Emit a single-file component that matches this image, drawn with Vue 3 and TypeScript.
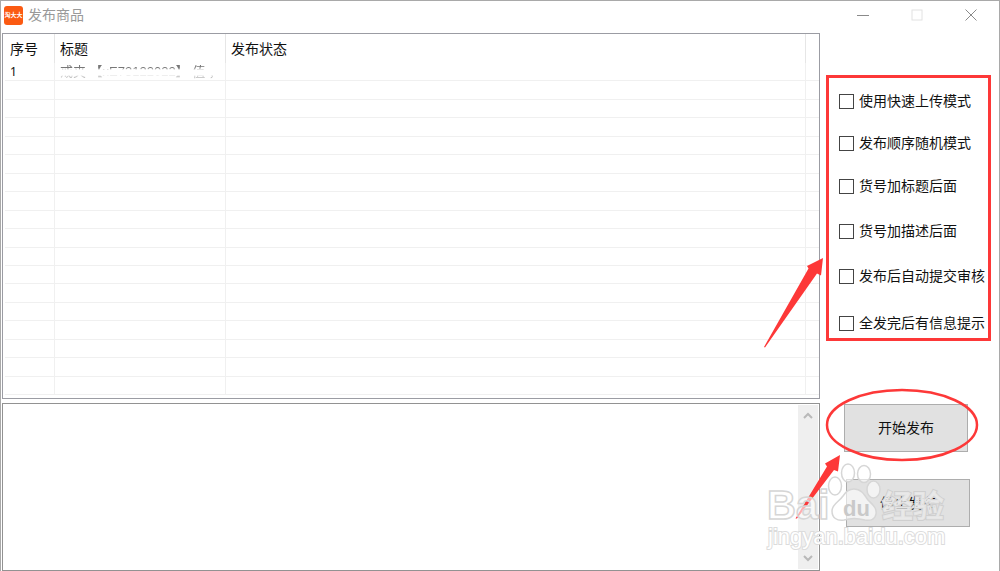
<script setup lang="ts">
import { reactive } from 'vue'

interface Option {
  id: string
  label: string
  checked: boolean
}

const options = reactive<Option[]>([
  { id: 'fast', label: '使用快速上传模式', checked: false },
  { id: 'random', label: '发布顺序随机模式', checked: false },
  { id: 'after-title', label: '货号加标题后面', checked: false },
  { id: 'after-desc', label: '货号加描述后面', checked: false },
  { id: 'auto-submit', label: '发布后自动提交审核', checked: false },
  { id: 'notify', label: '全发完后有信息提示', checked: false },
])

const emptyRows = 17
</script>

<template>
  <div class="window">
    <header class="titlebar">
      <span class="logo">淘大大</span>
      <h1 class="title">发布商品</h1>
      <div class="controls">
        <button class="control" type="button" aria-label="最小化">
          <svg width="12" height="12" viewBox="0 0 12 12"><path d="M0 6.5H12" stroke="#8a8a8a" /></svg>
        </button>
        <button class="control" type="button" aria-label="最大化" disabled>
          <svg width="12" height="12" viewBox="0 0 12 12"><rect x="1" y="1" width="10" height="10" fill="none" stroke="#e2e2e2" /></svg>
        </button>
        <button class="control" type="button" aria-label="关闭">
          <svg width="12" height="12" viewBox="0 0 12 12"><path d="M.5 .5L11.5 11.5M11.5 .5L.5 11.5" stroke="#8a8a8a" /></svg>
        </button>
      </div>
    </header>

    <main class="body">
      <section class="left">
        <div class="list">
          <table class="grid">
            <colgroup>
              <col class="col-no" />
              <col class="col-title" />
              <col />
              <col class="col-end" />
            </colgroup>
            <thead>
              <tr>
                <th>序号</th>
                <th>标题</th>
                <th>发布状态</th>
                <td></td>
              </tr>
            </thead>
            <tbody>
              <tr>
                <td class="number">1</td>
                <td><span class="faded">戒夹 【xE73122022】 值 ，</span></td>
                <td></td>
                <td></td>
              </tr>
              <tr v-for="n in emptyRows" :key="n">
                <td></td>
                <td></td>
                <td></td>
                <td></td>
              </tr>
            </tbody>
          </table>
        </div>
        <div class="log">
          <textarea class="log-text" aria-label="发布日志" readonly></textarea>
          <div class="scrollbar">
            <svg width="10" height="8" viewBox="0 0 10 8"><path d="M1 6L5 2L9 6" fill="none" stroke="#b9b9b9" stroke-width="2" /></svg>
            <svg width="10" height="8" viewBox="0 0 10 8"><path d="M1 2L5 6L9 2" fill="none" stroke="#b9b9b9" stroke-width="2" /></svg>
          </div>
        </div>
      </section>

      <aside class="right">
        <div class="options">
          <label v-for="o in options" :key="o.id" class="option" :for="o.id">
            <input :id="o.id" v-model="o.checked" class="check" type="checkbox" />
            <span>{{ o.label }}</span>
          </label>
        </div>
        <div class="actions">
          <button class="action" type="button">开始发布</button>
          <button class="action stop" type="button">停止发布</button>
        </div>
      </aside>
    </main>

    <svg class="marks" width="240" height="571" viewBox="760 0 240 571" aria-hidden="true">
      <g fill="#fd3838">
        <path d="M764 347L808.500 268.500L807 266L823 258L821 275.500L817 273.500L765 347.500Z" />
        <path d="M795.500 518.500L827 466.500L825 463.500L840 455L838 471.500L834 470L797 518.500Z" />
      </g>
      <ellipse cx="902" cy="425" rx="75" ry="35" fill="none" stroke="#fd3838" stroke-width="2.500" />
      <g class="mark-shape">
        <ellipse cx="835" cy="486" rx="6.500" ry="9" />
        <ellipse cx="848" cy="473" rx="6.500" ry="9" />
        <ellipse cx="864" cy="474" rx="6.500" ry="8.500" />
        <ellipse cx="873.500" cy="489.500" rx="6.500" ry="8.500" />
        <path d="M854 489C861 489 864 494 868 500C873 505 877 508 876 514C875 520 870 521 865 520C858 518 850 518 844 520C837 521 832 518 832 511C832 504 839 502 843 496C846 491 849 489 854 489Z" />
      </g>
      <text class="mark-name" x="767" y="519">Bai</text>
      <text class="mark-du" x="843" y="516">du</text>
      <text class="mark-cn" x="882" y="517">经验</text>
      <text class="mark-url" x="768" y="544">jingyan.baidu.com</text>
    </svg>
  </div>
</template>

<style>
body {
  margin: 0;
  background: #fff;
}
</style>

<style scoped>
.window {
  position: relative;
  display: flex;
  flex-direction: column;
  box-sizing: border-box;
  height: 100vh;
  min-height: 480px;
  overflow: hidden;
  border: 1px solid #a9a9a9;
  border-bottom: 0;
  background: #fff;
  color: #111;
  font-family: "Liberation Sans", "Noto Sans CJK SC", sans-serif;
  font-size: 14px;
  line-height: 20px;
}

.window *,
.window *::before {
  box-sizing: border-box;
}

button,
textarea {
  font: inherit;
  color: inherit;
}

.titlebar {
  display: flex;
  flex: none;
  align-items: center;
  height: 32px;
  padding: 0 16px 4px 3px;
}

.logo {
  width: 19px;
  height: 19px;
  border-radius: 3px;
  background: #fb5a12;
  color: #fff;
  font-size: 6px;
  font-weight: 700;
  line-height: 19px;
  text-align: center;
  white-space: nowrap;
}

.title {
  margin: 0 0 0 5px;
  color: #999;
  font-size: 14px;
  font-weight: 400;
}

.controls {
  display: flex;
  gap: 30px;
  margin-left: auto;
}

.control {
  display: flex;
  align-items: center;
  justify-content: center;
  width: 24px;
  height: 24px;
  padding: 0;
  border: 0;
  background: none;
}

.body {
  display: flex;
  flex: 1;
  min-height: 0;
}

.left {
  display: flex;
  flex: 1;
  flex-direction: column;
  gap: 4px;
  min-width: 0;
  padding-left: 1px;
}

.list {
  flex: 366 1 0;
  min-height: 0;
  padding: 0 0 3px 2px;
  border: 1px solid #9b9ca3;
}

.grid {
  width: 100%;
  height: 100%;
  border-collapse: separate;
  border-spacing: 0;
  table-layout: fixed;
}

.col-no {
  width: 50px;
}

.col-title {
  width: 171px;
}

.col-end {
  width: 13px;
}

.grid th,
.grid td {
  padding: 0 0 0 5px;
  line-height: 16px;
  text-align: left;
  white-space: nowrap;
}

.grid thead tr {
  height: 29px;
}

.grid tbody tr {
  height: 18px;
}

.grid th {
  border-right: 1px solid #e6e6e6;
  font-weight: 400;
}

.grid tbody td {
  border-right: 1px solid #f0f0f0;
  border-bottom: 1px solid #f0f0f0;
}

.grid tbody td:last-child {
  border-right: 0;
}

.grid .number {
  font-family: "Noto Sans", sans-serif;
  font-size: 12px;
}

.faded {
  display: block;
  height: 16px;
  overflow: hidden;
  color: #777;
  font-size: 13px;
  mask-image: linear-gradient(#000 0 4px, transparent 6px 11px, rgba(0, 0, 0, 0.5) 13px);
}

.log {
  display: flex;
  flex: 168 1 0;
  min-height: 0;
  border: 1px solid #929292;
}

.log-text {
  flex: 1;
  min-width: 0;
  padding: 4px;
  border: 0;
  outline: 0;
  background: #fff;
  resize: none;
}

.scrollbar {
  display: flex;
  flex-direction: column;
  align-items: center;
  justify-content: space-between;
  width: 20px;
  margin: 1px 1px 1px 0;
  padding: 7px 0;
  background: #efefef;
}

.right {
  display: flex;
  flex: none;
  flex-direction: column;
  width: 179px;
  padding: 42px 8px 0 6px;
}

.options {
  display: grid;
  grid-template-rows: 42px 43px 45px 45px 47px 20px;
  padding: 13px 0 5px 10px;
  border: 3px solid #fd3838;
}

.option {
  display: flex;
  align-items: center;
  align-self: start;
  gap: 5px;
  height: 20px;
  white-space: nowrap;
}

.check {
  flex: none;
  width: 15px;
  height: 15px;
  margin: 0;
  appearance: none;
  border: 1px solid #444;
  background: #fff;
}

.check:checked {
  background: #444;
  box-shadow: inset 0 0 0 2px #fff;
}

.actions {
  display: flex;
  flex-direction: column;
  align-items: flex-end;
  gap: 27px;
  margin-top: 63px;
  padding-right: 21px;
}

.action {
  width: 124px;
  height: 48px;
  margin-right: 2px;
  padding: 0;
  border: 1px solid #adadad;
  background: #e1e1e1;
}

.stop {
  margin-right: 0;
}

.marks {
  position: absolute;
  top: -1px;
  right: -1px;
  pointer-events: none;
}

.mark-shape,
.mark-name,
.mark-cn,
.mark-url {
  fill: rgba(255, 255, 255, 0.6);
  stroke: #d6d6d6;
  stroke-width: 1.5px;
}

.mark-name {
  font-size: 40px;
  font-weight: 700;
}

.mark-du {
  fill: #c9c9c9;
  font-size: 22px;
  font-weight: 700;
}

.mark-cn {
  font-size: 31px;
  font-weight: 700;
  stroke: #cfcfcf;
  stroke-width: 2px;
  fill: #ececec;
  fill-opacity: 0.8;
  paint-order: stroke;
}

.mark-url {
  font-size: 22px;
  stroke: #dcdcdc;
  stroke-width: 2px;
  fill: #fff;
  paint-order: stroke;
}
</style>
